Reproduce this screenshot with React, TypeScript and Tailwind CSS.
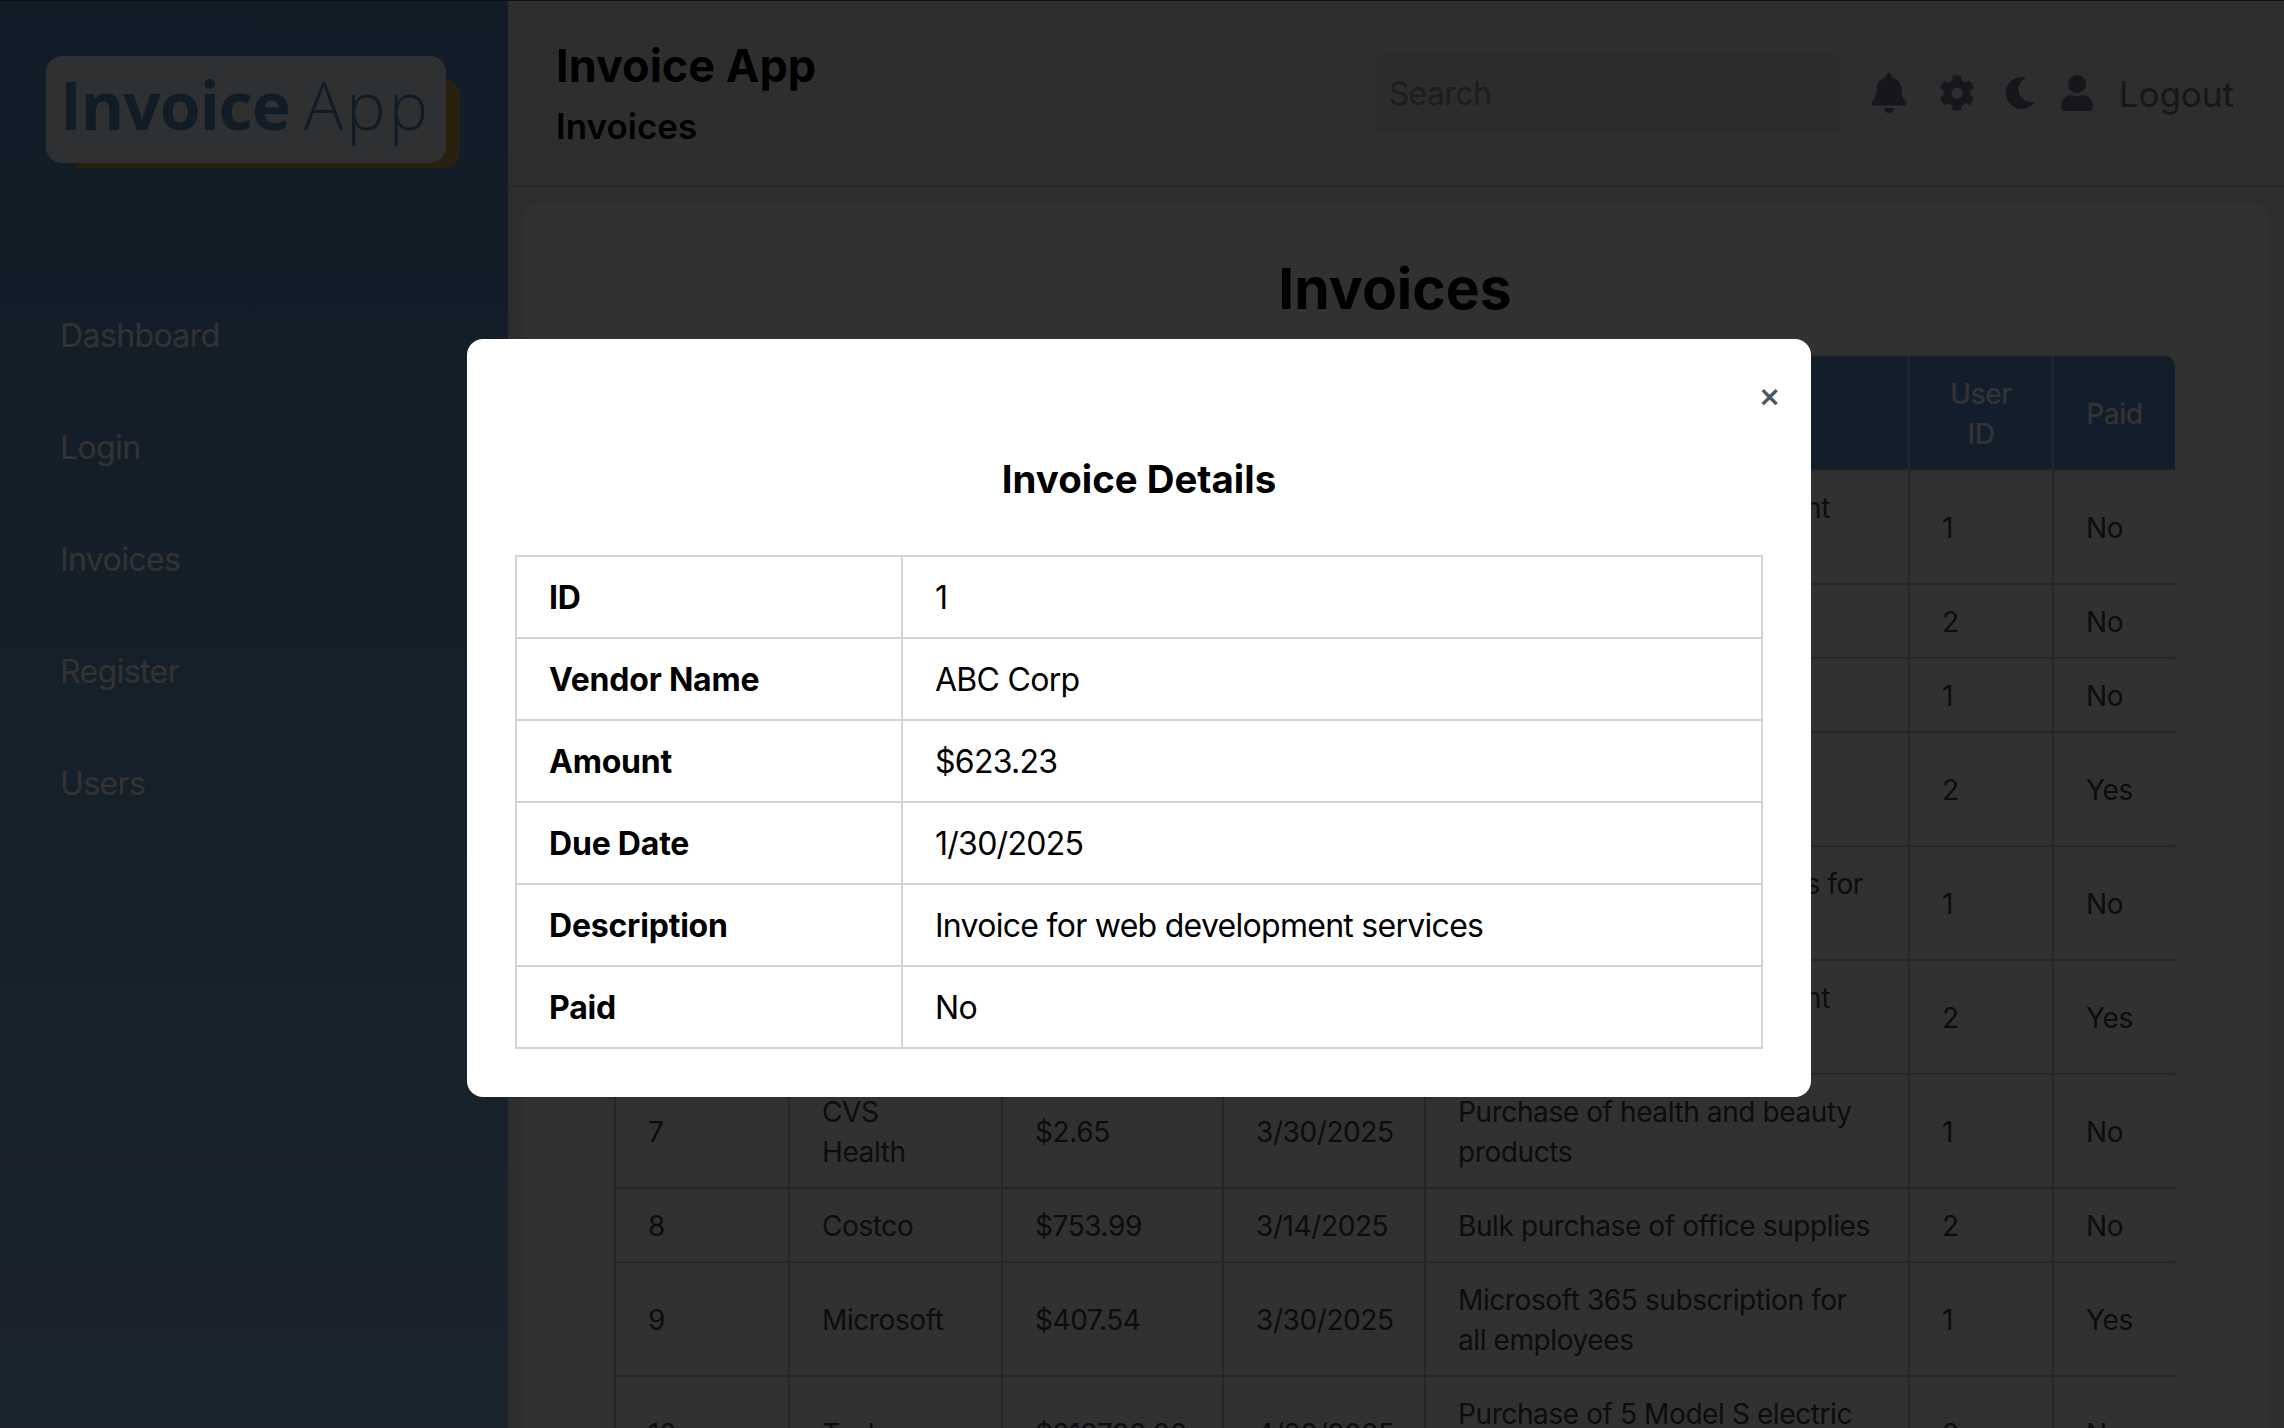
import { FaBell, FaCog, FaMoon, FaUser } from "react-icons/fa";

const navItems = ["Dashboard", "Login", "Invoices", "Register", "Users"];

const invoices = [
  { id: 1, vendor: "ABC Corp", amount: "$623.23", due: "1/30/2025", description: "Invoice for web development services", user: 1, paid: "No" },
  { id: 2, vendor: "XYZ Inc", amount: "$1,250.00", due: "2/15/2025", description: "Office supplies order", user: 2, paid: "No" },
  { id: 3, vendor: "Acme Co", amount: "$89.50", due: "2/20/2025", description: "Monthly internet bill", user: 1, paid: "No" },
  { id: 4, vendor: "Amazon Web", amount: "$320.10", due: "2/28/2025", description: "Cloud hosting for all of our production servers", user: 2, paid: "Yes" },
  { id: 5, vendor: "Walmart", amount: "$145.72", due: "3/1/2025", description: "Purchase of school supplies for the break room", user: 1, paid: "No" },
  { id: 6, vendor: "Best Buy", amount: "$980.00", due: "3/10/2025", description: "Invoice for web development services", user: 2, paid: "Yes" },
  { id: 7, vendor: "CVS Health", amount: "$2.65", due: "3/30/2025", description: "Purchase of health and beauty products", user: 1, paid: "No" },
  { id: 8, vendor: "Costco", amount: "$753.99", due: "3/14/2025", description: "Bulk purchase of office supplies", user: 2, paid: "No" },
  { id: 9, vendor: "Microsoft", amount: "$407.54", due: "3/30/2025", description: "Microsoft 365 subscription for all employees", user: 1, paid: "Yes" },
  { id: 10, vendor: "Tesla", amount: "$219700.00", due: "4/30/2025", description: "Purchase of 5 Model S electric cars", user: 2, paid: "No" },
];

const details = [
  ["ID", "1"],
  ["Vendor Name", "ABC Corp"],
  ["Amount", "$623.23"],
  ["Due Date", "1/30/2025"],
  ["Description", "Invoice for web development services"],
  ["Paid", "No"],
];

const columns = ["ID", "Vendor", "Amount", "Due Date", "Description", "User ID", "Paid"];

export default function App() {
  return (
    <div className="flex h-screen overflow-hidden border-t border-[#555555] bg-[#e6e6e6] font-['Inter',sans-serif]">
      <aside className="w-[508px] shrink-0 bg-gradient-to-b from-[#558ac4] to-[#85b4e0] pl-[46px]">
        <div className="relative mt-[55px] w-[400px]">
          <div className="absolute left-[30px] top-[23px] h-[89px] w-[384px] rounded-br-[16px] rounded-tr-[16px] bg-[#d2a050]" />
          <div className="relative flex h-[107px] items-center rounded-[16px] bg-[#e6f0fa] pb-[12px] pl-[14px] font-['Open_Sans',sans-serif] text-[66px] leading-none text-[#558ac4]">
            <span className="font-bold tracking-[-1px]">Invoice</span>
            <span className="ml-[14px] font-light tracking-[3px]">App</span>
          </div>
        </div>
        <nav className="mt-[149px] flex flex-col gap-[64px] pl-[14px]">
          {navItems.map((item) => (
            <a key={item} className="text-[32px] leading-[48px] tracking-[-0.6px] text-white">
              {item}
            </a>
          ))}
        </nav>
      </aside>
      <div className="flex min-w-0 flex-1 flex-col">
        <header className="flex h-[186px] shrink-0 items-center justify-between border-b-2 border-[#c8c8c8] pl-[48px] pr-[50px]">
          <div className="text-black">
            <h1 className="text-[45px] font-bold leading-[64px]">Invoice App</h1>
            <p className="mt-[2px] text-[35px] font-semibold leading-[52px]">Invoices</p>
          </div>
          <div className="flex items-center">
            <div className="flex h-[79px] w-[465px] items-center rounded-[8px] border-2 border-[#d8d8d8] bg-[#dcdcdc] px-[11px] pt-[2px] text-[32px] tracking-[-0.6px] text-[#8f8f8f]">
              Search
            </div>
            <FaBell className="ml-[28px] text-[#6b7280]" size={40} />
            <FaCog className="ml-[30px] text-[#6b7280]" size={36} />
            <FaMoon className="ml-[29px] text-[#6b7280]" size={32} />
            <FaUser className="ml-[23px] text-[#6b7280]" size={36} />
            <span className="ml-[24px] pt-[2px] text-[35px] text-[#6b7280]">Logout</span>
          </div>
        </header>
        <main className="min-h-0 flex-1 overflow-hidden px-[16px] pt-[16px]">
          <div className="rounded-[16px] bg-[#f2f2f2] px-[90px] pt-[50px]">
            <h2 className="mb-[30px] pr-[2px] text-center text-[57px] font-bold leading-[72px] text-black">Invoices</h2>
            <div className="w-[1561px] overflow-hidden rounded-t-[12px]">
              <table className="w-full table-fixed border-collapse text-[28px] leading-[40px] tracking-[-0.4px] text-[#374151]">
                <colgroup>
                  <col className="w-[174px]" />
                  <col className="w-[213px]" />
                  <col className="w-[221px]" />
                  <col className="w-[202px]" />
                  <col className="w-[484px]" />
                  <col className="w-[144px]" />
                  <col className="w-[123px]" />
                </colgroup>
                <thead>
                  <tr className="bg-[#5a94d8] text-white">
                    {columns.map((column) => (
                      <th key={column} className="border-2 border-[#bebebe] px-[30px] pb-[15px] pt-[17px] text-center font-medium">
                        {column}
                      </th>
                    ))}
                  </tr>
                </thead>
                <tbody>
                  {invoices.map((invoice) => (
                    <tr key={invoice.id}>
                      <td className="border-2 border-[#bebebe] px-[32px] pb-[15px] pt-[17px]">{invoice.id}</td>
                      <td className="border-2 border-[#bebebe] px-[32px] pb-[15px] pt-[17px]">{invoice.vendor}</td>
                      <td className="border-2 border-[#bebebe] px-[32px] pb-[15px] pt-[17px]">{invoice.amount}</td>
                      <td className="border-2 border-[#bebebe] px-[32px] pb-[15px] pt-[17px]">{invoice.due}</td>
                      <td className="border-2 border-[#bebebe] px-[32px] pb-[15px] pt-[17px]">{invoice.description}</td>
                      <td className="border-2 border-[#bebebe] px-[32px] pb-[15px] pt-[17px]">{invoice.user}</td>
                      <td className="border-2 border-[#bebebe] px-[32px] pb-[15px] pt-[17px]">{invoice.paid}</td>
                    </tr>
                  ))}
                </tbody>
              </table>
            </div>
          </div>
        </main>
      </div>
      <div className="fixed inset-0 flex items-center justify-center bg-black/80 pr-[6px] pt-[8px]">
        <div className="relative w-[1344px] rounded-[16px] bg-white p-[48px]">
          <button className="absolute right-[30px] top-[36px] text-[34px] font-medium leading-[40px] text-[#4b5563]">×</button>
          <h2 className="mb-[48px] mt-[64px] text-center text-[38.4px] font-bold leading-[56px] text-black">Invoice Details</h2>
          <table className="w-full table-fixed border-collapse text-[32px] leading-[48px] text-black">
            <tbody>
              {details.map(([label, value]) => (
                <tr key={label}>
                  <td className="w-[386px] border-2 border-[#d1d5db] px-[32px] pb-[15px] pt-[17px] font-bold tracking-[-0.2px]">{label}</td>
                  <td className="border-2 border-[#d1d5db] px-[32px] pb-[15px] pt-[17px] tracking-[-0.72px]">{value}</td>
                </tr>
              ))}
            </tbody>
          </table>
        </div>
      </div>
    </div>
  );
}
